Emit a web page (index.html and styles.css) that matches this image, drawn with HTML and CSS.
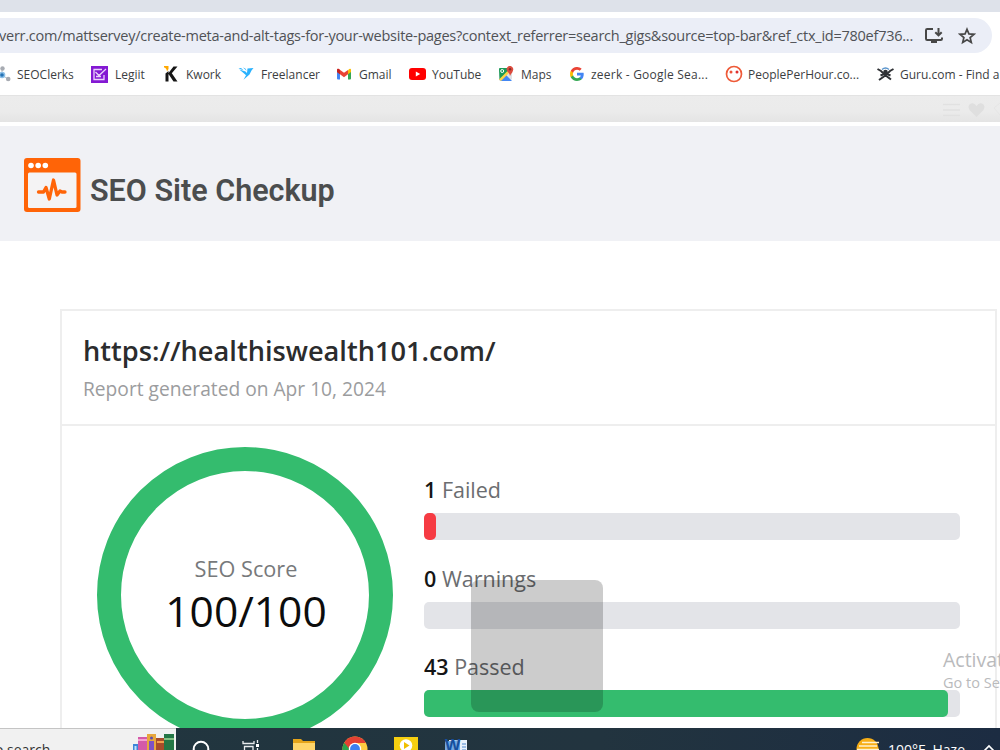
FILE: index.html
```
<!DOCTYPE html>
<html lang="en">
<head>
    <meta charset="UTF-8">
    <title>SEO Site Checkup</title>
    <link rel="stylesheet" href="styles.css">
</head>
<body>
    <div class="screen">
        <div class="tabstrip"></div>
        <div class="toolbar">
            <div class="address">
                <span class="url">verr.com/mattservey/create-meta-and-alt-tags-for-your-website-pages?context_referrer=search_gigs&amp;source=top-bar&amp;ref_ctx_id=780ef736...</span>
                <svg class="install" width="20" height="18" viewBox="0 0 20 18" fill="none" stroke="#474747" stroke-width="2">
                    <path d="M9 2H3.200Q2 2 2 3.200V11.800Q2 13 3.200 13H16.800Q18 13 18 11.800V10.500M14.500 1V8M11.300 5.200L14.500 8.400L17.700 5.200"/>
                    <path d="M7 13.500h6v2.500H7z" fill="#474747" stroke="none"/>
                </svg>
                <svg class="star" width="18" height="18" viewBox="0 0 18 18" fill="none" stroke="#474747" stroke-width="1.700">
                    <path d="M9 2.300L10.900 6.900L15.900 7.300L12.100 10.500L13.300 15.400L9 12.800L4.700 15.400L5.900 10.500L2.100 7.300L7.100 6.900Z"/>
                </svg>
            </div>
        </div>
        <div class="bookmarks">
            <div class="bm bm-seo">
                <svg width="16" height="16" viewBox="0 0 16 16">
                    <path d="M7 3V9L13 13" stroke="#b9bcc2" fill="none"/>
                    <circle cx="7.500" cy="2.500" r="2.200" fill="#a7abb2"/>
                    <circle cx="7" cy="9" r="3.300" fill="#8cc0e8"/>
                    <circle cx="7" cy="9" r="1.800" fill="#2672b4"/>
                    <circle cx="13.200" cy="13" r="2.300" fill="#a7abb2"/>
                </svg>
                <span>SEOClerks</span>
            </div>
            <div class="bm bm-legiit">
                <svg width="17" height="17" viewBox="0 0 17 17">
                    <path d="M0 0h17v17H0z" fill="#8419d3"/>
                    <path d="M11 3.500H3V13.500H13V9M4.500 6L8 9.500L15 3M5 10.500h5" fill="none" stroke="#ead3fa" stroke-width="1.300"/>
                </svg>
                <span>Legiit</span>
            </div>
            <div class="bm bm-kwork">
                <svg width="16" height="16" viewBox="0 0 16 16">
                    <path d="M1 0H5.500V3L4 5.500Q3.500 1.800 1 1.500Z" fill="#ffa800"/>
                    <path d="M2.500 7.500L5.500 5V7L10.500 0.500H14.500L8.800 7.200L14.500 15.500H10.500L5.500 8V15.500H2.500Z" fill="#161616"/>
                </svg>
                <span>Kwork</span>
            </div>
            <div class="bm bm-free">
                <svg width="16" height="16" viewBox="0 0 16 16" fill="#29b2fe">
                    <path d="M9.500 2.500L15.500 2L13.500 4.500L11.500 8.500L5.500 13.800L8 9.200L5.500 7L1.300 3.500L7.500 5.500L9 7Z"/>
                    <path d="M0.500 2.500L3 2L5.500 4.300ZM5 1.500L7.300 2.500L8.800 5Z"/>
                </svg>
                <span>Freelancer</span>
            </div>
            <div class="bm bm-gmail">
                <svg width="16" height="16" viewBox="0 0 16 16">
                    <path d="M1 3.500L4 5.500V13.500H2Q1 13.500 1 12.500Z" fill="#4285f4"/>
                    <path d="M12 5.500L15 3.500V12.500Q15 13.500 14 13.500H12Z" fill="#34a853"/>
                    <path d="M12 4.200L13.200 3Q15 2 15 4V6L12 8.300Z" fill="#fbbc04"/>
                    <path d="M1 6V4Q1 2 2.800 3L8 6.800L12 3.900V8.300L8 11.200L4 8.300Z" fill="#ea4335"/>
                    <path d="M1 6V4Q1.200 2.500 2.500 2.800L4 4V8.300Z" fill="#c5221f"/>
                </svg>
                <span>Gmail</span>
            </div>
            <div class="bm bm-yt">
                <svg width="17" height="16" viewBox="0 0 17 16">
                    <rect y="2" width="17" height="12" rx="3" fill="#f00"/>
                    <path d="M6.800 5.500L11.200 8L6.800 10.500Z" fill="#fff"/>
                </svg>
                <span>YouTube</span>
            </div>
            <div class="bm bm-maps">
                <svg width="16" height="16" viewBox="0 0 16 16">
                    <path d="M2 2H12L14 6V13L12 15H2L1 14V3Z" fill="#dfe2e6"/>
                    <path d="M1 3Q1 2 2 2H11L10 6L1.500 14Z" fill="#1c9b58"/>
                    <path d="M2 15L8 9L14 15Z" fill="#4387f4"/>
                    <path d="M1 13.500L9.500 5L11 7L3 15Z" fill="#fdd446"/>
                    <circle cx="4.200" cy="5" r="1.500" fill="none" stroke="#fff"/>
                    <path d="M12 10Q11.800 7.500 9.500 5.500A3.300 3.300 0 1 1 15 4.500Q14.500 6.500 13 8Z" fill="#dc4b3e"/>
                    <circle cx="12" cy="3.300" r="1.200" fill="#852f29"/>
                </svg>
                <span>Maps</span>
            </div>
            <div class="bm bm-google">
                <svg width="14" height="14" viewBox="0 0 24 24">
                    <path fill="#4285f4" d="M23.500 12.300c0-.8-.1-1.600-.2-2.300H12v4.600h6.500c-.3 1.500-1.100 2.700-2.400 3.600v3h3.900c2.200-2.100 3.500-5.100 3.500-8.900z"/>
                    <path fill="#34a853" d="M12 24c3.200 0 6-1.100 8-2.900l-3.900-3c-1.100.7-2.500 1.200-4.100 1.200-3.100 0-5.800-2.100-6.700-5H1.300v3.100C3.300 21.300 7.300 24 12 24z"/>
                    <path fill="#fbbc05" d="M5.300 14.300c-.5-1.500-.5-3.100 0-4.600V6.600h-4c-1.700 3.400-1.700 7.400 0 10.800z"/>
                    <path fill="#ea4335" d="M12 4.800c1.800 0 3.300.6 4.600 1.800L20 3.200C14.200-2.200 4.900-.6 1.300 6.600l4 3.100c.9-2.900 3.600-4.900 6.700-4.900z"/>
                </svg>
                <span>zeerk - Google Sea...</span>
            </div>
            <div class="bm bm-pph">
                <svg width="18" height="18" viewBox="0 0 18 18">
                    <circle cx="9" cy="9" r="7.500" fill="#fff" stroke="#ee5a38" stroke-width="1.700"/>
                    <circle cx="6" cy="7" r="1.500" fill="#ee5038"/>
                    <circle cx="12" cy="7" r="1.500" fill="#df3030"/>
                </svg>
                <span>PeoplePerHour.co...</span>
            </div>
            <div class="bm bm-guru">
                <svg width="17" height="16" viewBox="0 0 17 16" fill="none">
                    <path d="M0.500 3L4 5L8 9L14 13.500M16.500 3L13 5L9 9L2 14M3.500 9.500L7 8M13.500 9.500L10 8" stroke="#303236" stroke-width="2"/>
                    <circle cx="8.500" cy="6" r="2.300" fill="#303236"/>
                    <path d="M5 3.500Q8.500 0.500 12 3.500" stroke="#5a95cd" stroke-width="1.300"/>
                </svg>
                <span>Guru.com - Find a</span>
            </div>
        </div>
        <div class="strip">
            <svg width="60" height="20" viewBox="0 0 60 20">
                <path d="M3 5.500h17M3 11h17M3 16.500h17" stroke="#e1e1e1" stroke-width="1.600"/>
                <path d="M36.500 18L29.500 11Q27 6 31 4.500Q34.500 3.500 36.500 7Q38.500 3.500 42 4.500Q46 6 43.500 11Z" fill="#dfdfdf"/>
                <path d="M60 4L54 9L60 16" stroke="#e5e5e5" fill="none"/>
            </svg>
        </div>
        <div class="site-header">
            <svg class="logo" width="58" height="56" viewBox="0 0 58 56">
                <rect x="1" y="1" width="56.500" height="54" rx="3" fill="#ff6407"/>
                <rect x="5" y="15.500" width="48.500" height="35.500" rx="1.500" fill="#f4f3f4"/>
                <circle cx="8" cy="8.500" r="2.800" fill="#fff"/>
                <circle cx="15.200" cy="8.500" r="2.800" fill="#fff"/>
                <circle cx="22.300" cy="8.500" r="2.800" fill="#fff"/>
                <path d="M15.500 35H20.500L23 30.500L26.300 42L30.500 23L34 38L37 34L39 35H42" fill="none" stroke="#ff6407" stroke-width="3.300" stroke-linecap="round" stroke-linejoin="round"/>
            </svg>
            <span class="brand">SEO Site Checkup</span>
        </div>
        <div class="page">
            <div class="report">
                <div class="report-head">
                    <h1>https://healthiswealth101.com/</h1>
                    <p>Report generated on Apr 10, 2024</p>
                </div>
                <div class="report-body">
                    <div class="score">
                        <span class="score-label">SEO Score</span>
                        <span class="score-value">100/100</span>
                    </div>
                    <div class="stats">
                        <div class="stat">
                            <div class="label"><b>1</b> Failed</div>
                            <div class="bar"><div class="fill failed" style="width: 2.2%"></div></div>
                        </div>
                        <div class="stat">
                            <div class="label"><b>0</b> Warnings</div>
                            <div class="bar"></div>
                        </div>
                        <div class="stat">
                            <div class="label"><b>43</b> Passed</div>
                            <div class="bar"><div class="fill passed" style="width: 97.8%"></div></div>
                        </div>
                    </div>
                </div>
            </div>
        </div>
        <div class="taskbar">
            <div class="search">
                <span>o search</span>
                <svg width="44" height="22" viewBox="0 0 44 22">
                    <path d="M1 10h6v12H1z" fill="#3d86d8"/><path d="M2.500 12h2v10h-2z" fill="#bfe0ff"/>
                    <path d="M6 3h10v19H6z" fill="#d45aa8"/><path d="M6 5h10v2H6z" fill="#f3a3d2"/>
                    <path d="M15 0h9v22h-9z" fill="#e7a73c"/><path d="M17 7h5v15h-5z" fill="#7c52c5"/><circle cx="19.500" cy="4" r="1.500" fill="#5b4bb0"/>
                    <path d="M24 4h9v18h-9z" fill="#a84c2a"/><path d="M25 7h7v2h-7z" fill="#f0a14d"/>
                    <path d="M32 0h10v22H32z" fill="#257746"/><path d="M32 4h10v2H32z" fill="#86c285"/>
                </svg>
            </div>
            <div class="apps">
                <svg width="18" height="18" viewBox="0 0 18 18"><circle cx="9" cy="9" r="7.300" fill="none" stroke="#fff" stroke-width="2"/></svg>
                <svg width="18" height="18" viewBox="0 0 18 18" fill="none" stroke="#e8ecee" stroke-width="1.300"><path d="M1 1V3.500H12V1M2.500 14V6.500H11V14M15.500 0V3M15.500 8V14"/><path d="M14 4h3v3h-3z" fill="#fff" stroke="none"/></svg>
                <svg width="24" height="20" viewBox="0 0 24 20"><path d="M1 0H9L11 2H23V20H1Z" fill="#e5a419"/><path d="M1 4H23V20H1Z" fill="#ffd56a"/></svg>
                <svg width="26" height="26" viewBox="0 0 26 26">
                    <circle cx="13" cy="13" r="12.500" fill="#ffcd40"/>
                    <path d="M13 13L2.200 6.800A12.500 12.500 0 0 0 13 25.500Z" fill="#2aa34d"/>
                    <path d="M13 7H23.900A12.500 12.500 0 0 0 2.200 6.800L7.500 13Z" fill="#e34133"/>
                    <circle cx="13" cy="13" r="6.200" fill="#fff"/><circle cx="13" cy="13" r="4.900" fill="#3c80ef"/>
                </svg>
                <svg width="24" height="22" viewBox="0 0 24 22"><path d="M0 0h24v22H0z" fill="#f6cf10"/><circle cx="12" cy="8.500" r="6.300" fill="#fff"/><path d="M10 5L15.500 8.500L10 12Z" fill="#f0c000"/></svg>
                <div class="word">
                    <svg width="22" height="22" viewBox="0 0 22 22"><path d="M4 0H22V22H4Z" fill="#e8f2fd"/><path d="M0 1.500L15 0V22H0Z" fill="#74a9e3"/><path d="M17 4h4M17 7h4M17 10h4" stroke="#4d88cf"/></svg>
                    <span>W</span>
                </div>
            </div>
            <div class="tray">
                <svg width="24" height="24" viewBox="0 0 24 24"><circle cx="11.500" cy="11" r="11" fill="#f7ae16"/><path d="M6 4.500H23M3 8H21M1 11.500H23" stroke="#fff2cf" stroke-width="1.700"/></svg>
                <span class="weather">100°F&nbsp; Haze</span>
                <svg class="chevron" width="12" height="8" viewBox="0 0 12 8"><path d="M1 7L6 2L11 7" fill="none" stroke="#fff" stroke-width="1.600"/></svg>
            </div>
        </div>
        <div class="drag-box"></div>
        <div class="watermark">
            <div class="wm-title">Activate Windows</div>
            <div class="wm-text">Go to Settings</div>
        </div>
    </div>
</body>
</html>
```
FILE: styles.css
```
body, h1, p {
    margin: 0;
    padding: 0;
}
body {
    background: #fff;
    font-family: "Open Sans", "Noto Sans", sans-serif;
}
svg {
    display: block;
    flex: none;
}
.screen {
    width: 1000px;
    height: 750px;
    position: relative;
    overflow: hidden;
    display: flex;
    flex-direction: column;
}
.tabstrip {
    flex: none;
    height: 12px;
    background: #dee2ea;
}
/* browser bars */
.toolbar {
    flex: none;
    height: 41px;
    padding-top: 6px;
    box-sizing: border-box;
}
.address {
    width: 992px;
    height: 35px;
    background: #ebeef7;
    border-radius: 0 18px 18px 0;
    display: flex;
    align-items: center;
}
.url {
    width: 925px;
    margin-left: -1px;
    font-size: 14.5px;
    letter-spacing: -0.25px;
    color: #505256;
    white-space: nowrap;
}
.star {
    margin-left: 14px;
}
.bookmarks {
    flex: none;
    height: 43px;
    box-sizing: border-box;
    border-bottom: 1px solid #e3e3e3;
    display: flex;
    font-size: 12px;
    color: #3c3e42;
}
.bm {
    flex: none;
    display: flex;
    align-items: center;
    gap: 7px;
    white-space: nowrap;
}
.bm-seo {
    width: 96px;
    margin-left: -5px;
    gap: 6px;
}
.bm-legiit {
    width: 72px;
}
.bm-kwork {
    width: 75px;
}
.bm-free {
    width: 98px;
}
.bm-gmail {
    width: 73px;
}
.bm-yt {
    width: 89px;
    gap: 6px;
}
.bm-maps {
    width: 72px;
}
.bm-google {
    width: 155px;
    letter-spacing: 0.22px;
}
.bm-pph {
    width: 152px;
    gap: 5px;
}
.bm-guru {
    gap: 6px;
}
.strip {
    flex: none;
    height: 26px;
    background: linear-gradient(#ececec, #ebebeb 60%, #e4e4e4);
    display: flex;
    align-items: center;
    justify-content: flex-end;
}
.site-header {
    flex: none;
    height: 115px;
    margin-top: 4px;
    background: #f0f1f5;
    display: flex;
    align-items: center;
    padding: 3px 0 0 23px;
    box-sizing: border-box;
}
.brand {
    margin: 11px 0 0 9px;
    font-family: Roboto, sans-serif;
    font-size: 30.5px;
    font-weight: 600;
    color: #4b4d4e;
}
/* report */
.page {
    height: 487px;
    flex: none;
    overflow: hidden;
    padding: 68px 0 0 60px;
    box-sizing: border-box;
}
.report {
    width: 937px;
    height: 500px;
    box-sizing: border-box;
    border: 2px solid #eee;
}
.report-head {
    height: 92px;
    border-bottom: 2px solid #eee;
    padding: 21px 0 0 21px;
}
h1 {
    font-size: 27.2px;
    line-height: 38px;
    font-weight: 600;
    color: #2b2c2d;
}
.report-head p {
    font-size: 19.2px;
    line-height: 38px;
    color: #9b9c9e;
}
.report-body {
    display: flex;
    padding: 21px 0 0 35px;
}
.score {
    width: 296px;
    height: 296px;
    box-sizing: border-box;
    border: 24px solid #34bc6e;
    border-radius: 50%;
    display: flex;
    flex-direction: column;
    align-items: center;
    padding: 83px 0 0 2px;
}
.score-label {
    font-size: 21.7px;
    line-height: 30px;
    color: #77797b;
}
.score-value {
    font-size: 42.5px;
    line-height: 54px;
    color: #0c0c0c;
}
.stats {
    width: 536px;
    margin-left: 31px;
    padding-top: 26px;
}
.stat {
    height: 88.7px;
}
.label {
    font-size: 21.5px;
    line-height: 34px;
    color: #6b6d70;
}
.label b {
    font-weight: 600;
    color: #151515;
}
.bar {
    height: 27px;
    margin-top: 6px;
    background: #e3e4e8;
    border-radius: 5px;
}
.fill {
    height: 27px;
    border-radius: 5px;
}
.failed {
    background: #f63b43;
}
.passed {
    background: #34bc6e;
}
.taskbar {
    flex: none;
    height: 22px;
    overflow: hidden;
    background: linear-gradient(90deg, #21363f, #22343f 60%, #1c2c42);
    display: flex;
}
.search {
    width: 176px;
    height: 22px;
    box-sizing: border-box;
    border-top: 1px solid #c4c4c4;
    background: #f1f1f1;
    display: flex;
    font-size: 14px;
    color: #333;
}
.search span {
    width: 138px;
    margin: 11px 0 0 -5px;
    line-height: 19px;
    white-space: nowrap;
}
.search svg {
    margin: 5px 0 0 1px;
}
.apps {
    display: flex;
    padding-top: 9px;
    margin-left: 16px;
}
.apps svg:nth-child(1) {
    margin-top: 3px;
}
.apps svg:nth-child(2) {
    margin: 3px 0 0 32px;
}
.apps svg:nth-child(3) {
    margin: 2px 0 0 32px;
}
.apps svg:nth-child(4) {
    margin: -1px 0 0 26px;
}
.apps svg:nth-child(5) {
    margin-left: 26px;
}
.word {
    position: relative;
    margin-left: 27px;
}
.word span {
    position: absolute;
    left: 0;
    top: -3px;
    font-size: 16px;
    font-weight: bold;
    color: #164f9e;
}
.tray {
    display: flex;
    margin-left: auto;
    padding-top: 10px;
    color: #fff;
}
.weather {
    width: 88px;
    margin: 2px 0 0 8px;
    font-size: 14px;
    line-height: 20px;
    white-space: nowrap;
}
.chevron {
    margin: 6px 5px 0 7px;
}
.drag-box {
    position: absolute;
    left: 471px;
    top: 580px;
    width: 132px;
    height: 132px;
    border-radius: 8px;
    background: rgba(0, 0, 0, 0.2);
}
.watermark {
    position: absolute;
    left: 943px;
    top: 646px;
    color: #b9babc;
    white-space: nowrap;
}
.wm-title {
    font-size: 19.5px;
    line-height: 27px;
}
.wm-text {
    font-size: 14.5px;
    line-height: 20px;
}
```
